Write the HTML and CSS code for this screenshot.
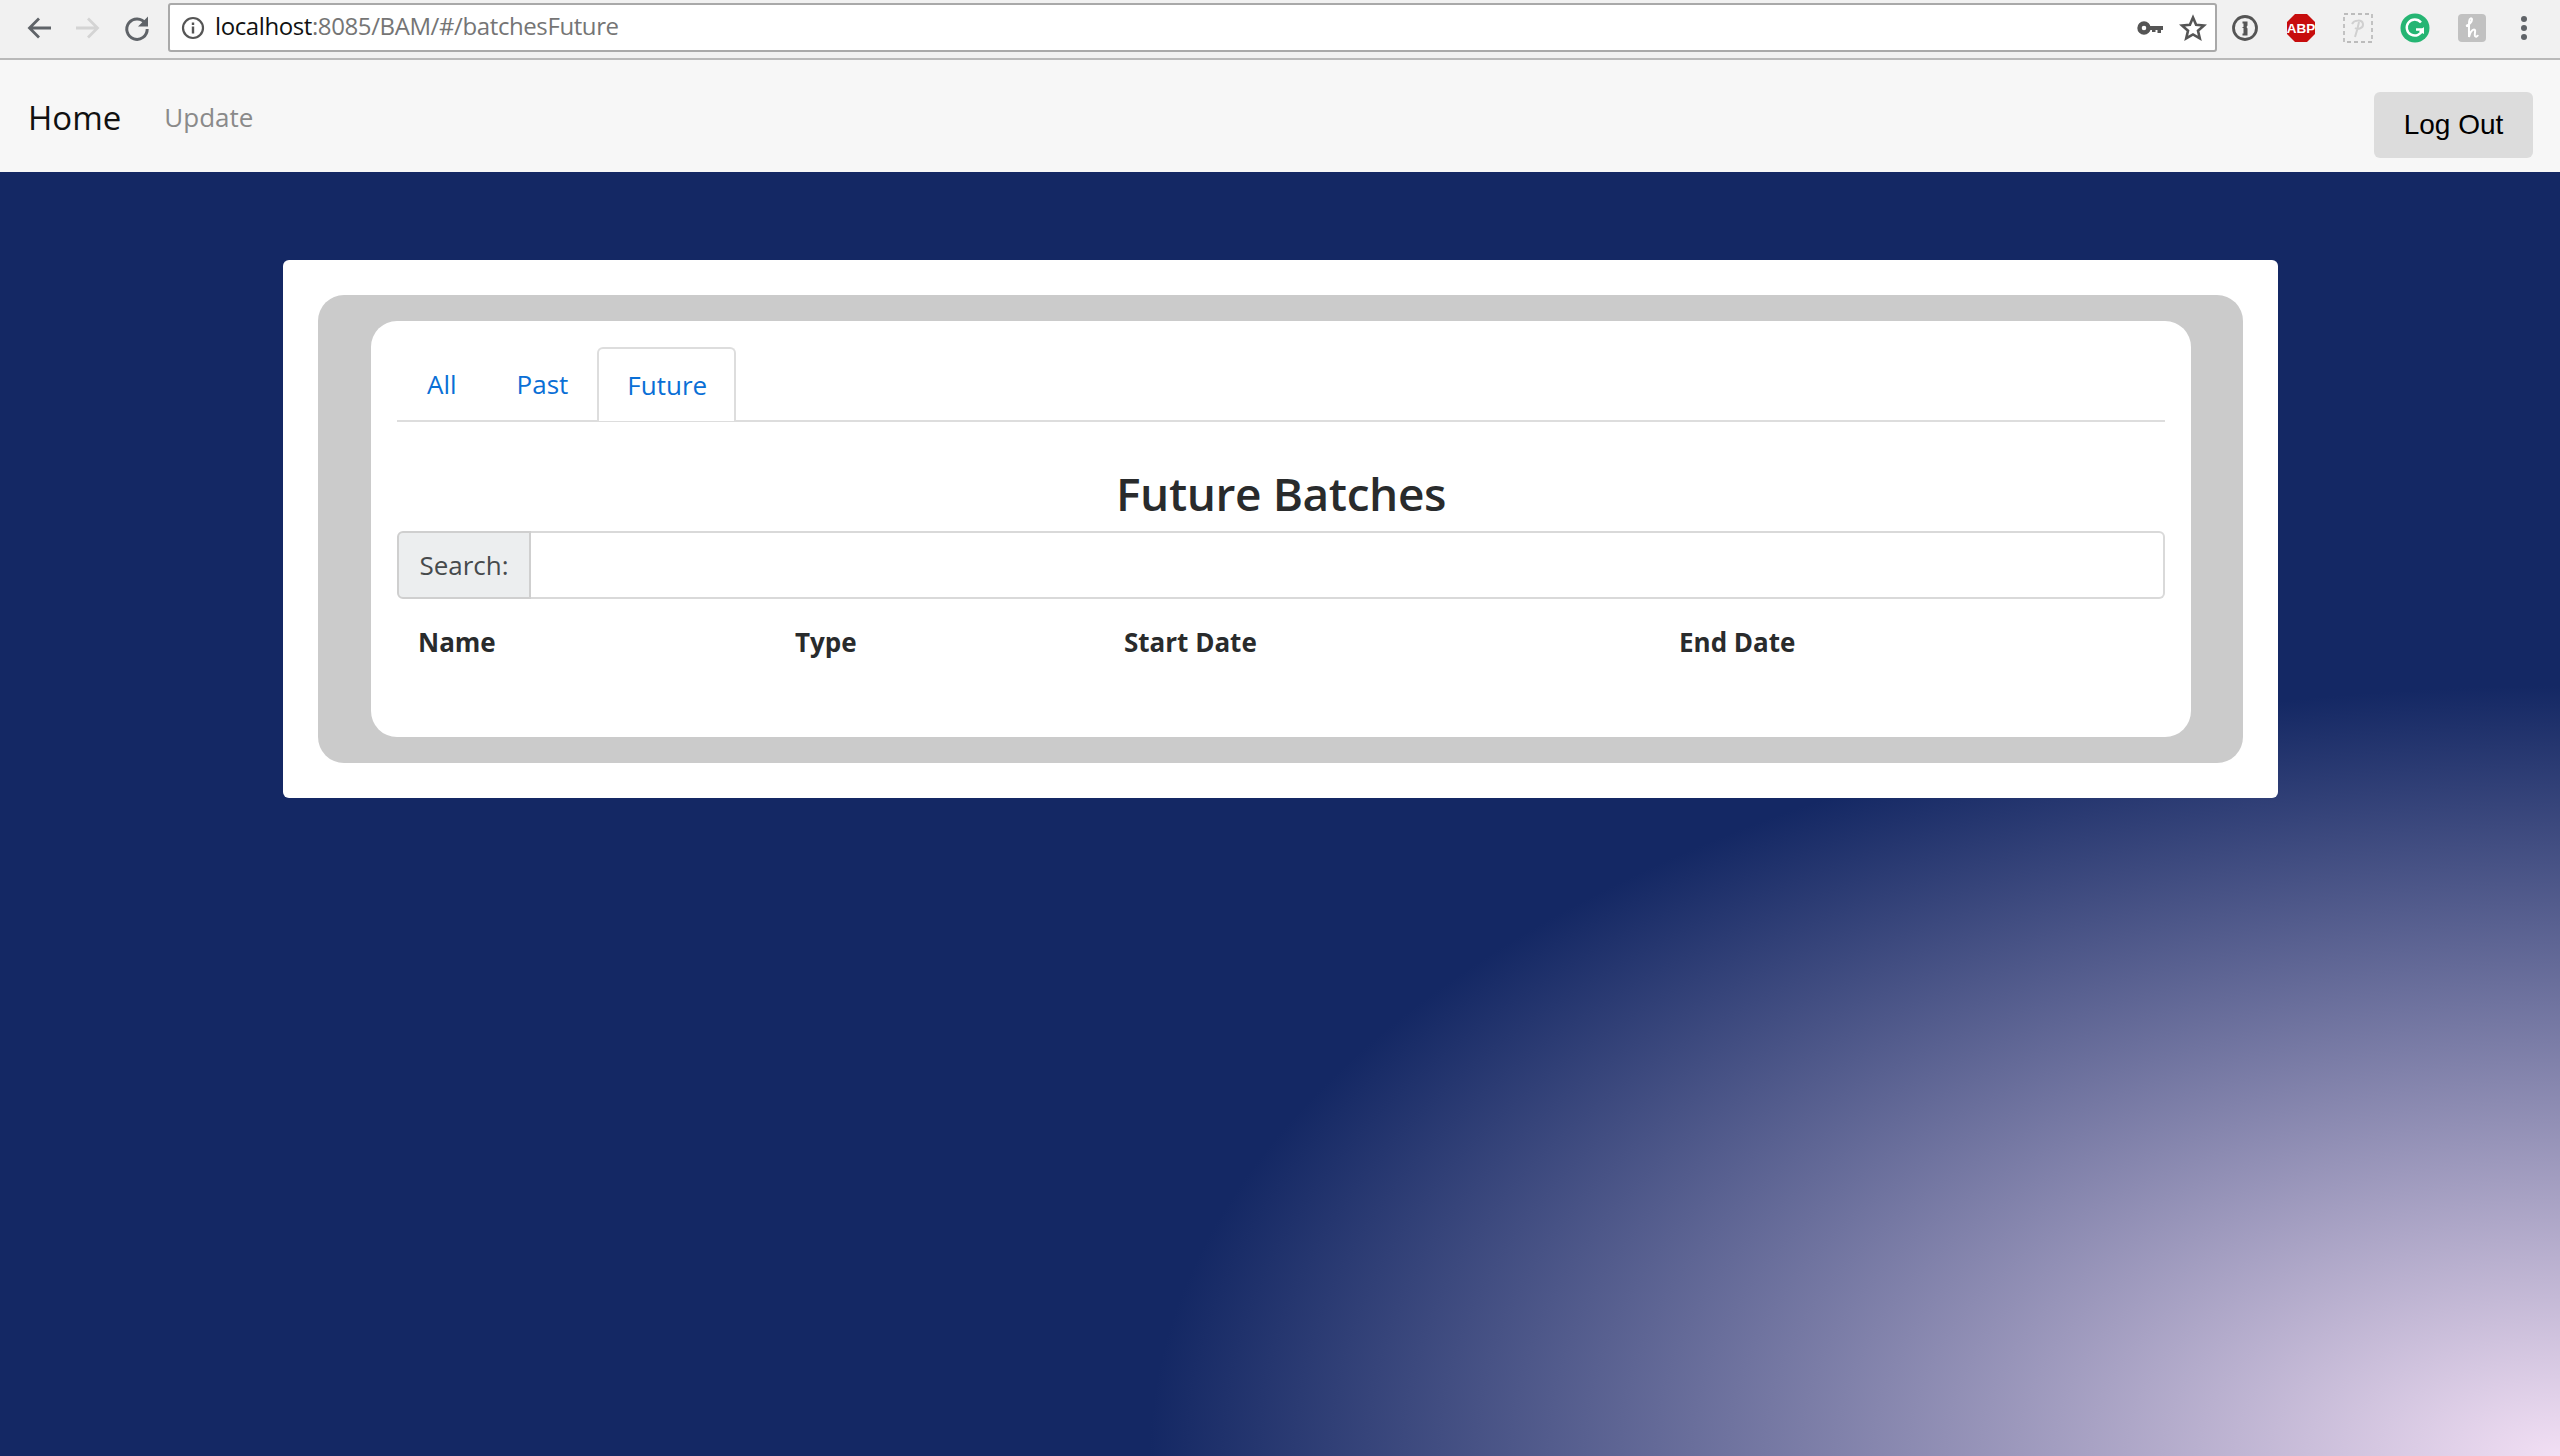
FILE: index.html
```html
<!DOCTYPE html>
<html lang="en">
<head>
<meta charset="utf-8">
<title>Future Batches</title>
<link rel="stylesheet" href="styles.css">
</head>
<body>
<header class="chrome">
  <div class="chrome-nav">
    <svg class="ic" width="30" height="30" viewBox="0 0 30 30"><path d="M27 15H6M15 5.500L5.500 15l9.500 9.500" fill="none" stroke="#5f6368" stroke-width="2.800"/></svg>
    <svg class="ic" width="30" height="30" viewBox="0 0 30 30"><path d="M3 15h21M15 5.500l9.500 9.500-9.500 9.500" fill="none" stroke="#d4d4d4" stroke-width="2.800"/></svg>
    <svg class="ic" width="30" height="30" viewBox="0 0 30 30"><path d="M23.500 10.500A10.200 10.200 0 1 0 25.200 16" fill="none" stroke="#5f6368" stroke-width="3"/><path d="M26 3.500v10H16z" fill="#5f6368"/></svg>
  </div>
  <div class="omnibox">
    <svg class="ic" width="26" height="26" viewBox="0 0 26 26"><circle cx="13" cy="13" r="10" fill="none" stroke="#555" stroke-width="2.200"/><path d="M13 11.500v7M13 7.500v2.400" stroke="#555" stroke-width="2.400"/></svg>
    <span class="url"><span class="url-host">localhost</span>:8085/BAM/#/batchesFuture</span>
    <svg class="ic key" width="26" height="18" viewBox="0 0 26 18"><circle cx="7" cy="9" r="4.500" fill="none" stroke="#555" stroke-width="4.400"/><path d="M12 7h14v4h-2v3h-3.500v-3h-2v2H15v-2h-3z" fill="#555"/></svg>
    <svg class="ic" width="28" height="28" viewBox="0 0 28 28"><path d="M14 3.500l3.100 7.300 7.900.7-6 5.200 1.800 7.700-6.800-4-6.800 4 1.800-7.700-6-5.200 7.900-.7z" fill="none" stroke="#555" stroke-width="2.600"/></svg>
  </div>
  <div class="chrome-ext">
    <svg class="ic" width="28" height="28" viewBox="0 0 28 28"><circle cx="14" cy="14" r="11.500" fill="none" stroke="#555" stroke-width="2.800"/><path d="M11.500 7.500h5v4l-1 1.500 1 1.500v7h-5v-2h1v-5.500h-1v-1h1v-3.500h-1z" fill="#555"/></svg>
    <svg class="ic" width="30" height="30" viewBox="0 0 30 30"><path d="M9 1h12l8 8v12l-8 8H9l-8-8V9z" fill="#c70d0d"/><text x="15" y="20" class="abp">ABP</text></svg>
    <svg class="ic" width="30" height="30" viewBox="0 0 30 30"><rect x="1" y="1" width="28" height="28" fill="#f1f1f1" stroke="#aaa" stroke-width="1.300" stroke-dasharray="4 3"/><path d="M12 24c2-6 3-10 4-15M9 11c2-4 10-5 11 0 .5 4-5 6-8 4" fill="none" stroke="#d0d0d0" stroke-width="2"/></svg>
    <svg class="ic" width="30" height="30" viewBox="0 0 30 30"><circle cx="15" cy="15" r="14.500" fill="#25b573"/><path d="M21 9.500a8 8 0 1 0 1.500 7H16" fill="none" stroke="#fff" stroke-width="2.400"/><path d="M24 14v7l-5-2.500z" fill="#fff"/></svg>
    <svg class="ic" width="30" height="30" viewBox="0 0 30 30"><rect x="1" y="1" width="28" height="28" rx="4" fill="#c1c1c1"/><path d="M9 13c3-1 6-4 6-6.500 0-2-2.500-1.500-2.800 1.500C11.800 12 12 18 12 24c.8-4 3-7.500 5-7.500 2.500 0 0 4.500 1 6.500.8 1.300 2.500.5 3-1" fill="none" stroke="#fff" stroke-width="2"/></svg>
    <svg class="ic" width="14" height="30" viewBox="0 0 14 30"><circle cx="7" cy="6" r="3" fill="#5f6368"/><circle cx="7" cy="15" r="3" fill="#5f6368"/><circle cx="7" cy="24" r="3" fill="#5f6368"/></svg>
  </div>
</header>
<nav class="navbar">
  <a class="brand">Home</a>
  <a class="nav-link">Update</a>
  <button class="logout">Log Out</button>
</nav>
<main class="stage">
  <section class="card">
    <div class="frame">
      <div class="panel">
        <ul class="tabs">
          <li class="tab">All</li>
          <li class="tab">Past</li>
          <li class="tab active">Future</li>
        </ul>
        <h3 class="title">Future Batches</h3>
        <div class="search">
          <span class="search-label">Search:</span>
          <span class="search-input"></span>
        </div>
        <div class="thead">
          <span>Name</span>
          <span>Type</span>
          <span>Start Date</span>
          <span>End Date</span>
        </div>
      </div>
    </div>
  </section>
</main>
</body>
</html>
```
FILE: styles.css
```css
* { box-sizing: border-box; }
html, body { margin: 0; height: 100%; }
body {
  width: 2560px;
  height: 1456px;
  display: flex;
  flex-direction: column;
  font-family: "Open Sans", "Noto Sans", sans-serif;
  overflow: hidden;
  color: #292b2c;
}
.ic { display: block; flex: none; }
.chrome {
  height: 60px;
  flex: none;
  display: flex;
  align-items: center;
  background: #f1f1f1;
  border-bottom: 2px solid #b9b9b9;
  padding: 0 0 3px 24px;
}
.chrome-nav { display: flex; gap: 19px; width: 144px; flex: none; }
.omnibox {
  width: 2049px;
  height: 49px;
  flex: none;
  display: flex;
  align-items: center;
  background: #fff;
  border: 2px solid #a9a9a9;
  border-radius: 3px;
  padding: 0 8px 0 10px;
}
.url {
  flex: 1;
  margin-left: 9px;
  font-size: 24px;
  letter-spacing: -0.4px;
  color: #757575;
  position: relative;
  top: -2px;
}
.url-host { color: #111; }
.key { margin-right: 16px; }
.chrome-ext { display: flex; align-items: center; gap: 27px; margin-left: 14px; }
.chrome-ext .ic:last-child { margin-left: 3px; }
.abp { font: bold 13.500px "Liberation Sans", sans-serif; fill: #fff; text-anchor: middle; }
.navbar {
  height: 112px;
  flex: none;
  display: flex;
  align-items: center;
  background: #f7f7f7;
  padding: 0 27px 0 28px;
}
.brand { font-size: 33px; color: #111; margin-right: 43px; position: relative; top: 1px; }
.nav-link { font-size: 26px; color: #8a8a8a; flex: 1; position: relative; top: 1px; }
.logout {
  width: 159px;
  height: 66px;
  border: 0;
  border-radius: 6px;
  background: #dcdcdc;
  color: #000;
  font: 28px "Liberation Sans", sans-serif;
  margin-top: 18px;
}
.stage {
  flex: 1;
  padding: 88px 282px 0 283px;
  background: radial-gradient(ellipse 1410px 770px at 100% 100%, #f2dff4 0%, #142864 100%) #142864;
}
.card {
  background: #fff;
  border-radius: 6px;
  padding: 35px;
}
.frame {
  background: #cbcbcb;
  border-radius: 26px;
  padding: 26px 52px 26px 53px;
}
.panel {
  background: #fff;
  border-radius: 26px;
  padding: 26px;
  height: 416px;
}
.tabs {
  display: flex;
  list-style: none;
  margin: 0;
  padding: 0;
  height: 75px;
  border-bottom: 2px solid #ddd;
}
.tab {
  font-size: 26px;
  color: #0a6fd6;
  padding: 0 30px;
  height: 74px;
  line-height: 74px;
}
.active {
  border: 2px solid #ddd;
  border-bottom: 0;
  border-radius: 6px 6px 0 0;
  background: #fff;
  padding: 0 27px 0 28px;
  line-height: 72px;
  margin-left: -1px;
}
.title {
  margin: 0;
  padding-top: 40px;
  height: 109px;
  text-align: center;
  font-size: 46px;
  line-height: 62px;
  font-weight: 600;
  letter-spacing: -0.4px;
}
.search {
  display: flex;
  height: 68px;
}
.search-label {
  width: 134px;
  background: #eceeef;
  border: 2px solid #cfcfcf;
  border-radius: 6px 0 0 6px;
  font-size: 26px;
  color: #464a4c;
  display: flex;
  align-items: center;
  justify-content: center;
}
.search-input {
  flex: 1;
  border: 2px solid #d9d9d9;
  border-left: 0;
  border-radius: 0 6px 6px 0;
}
.thead {
  display: grid;
  grid-template-columns: 377px 329px 555px 1fr;
  padding: 25px 21px 0;
  font-size: 26px;
  font-weight: 700;
}
```
